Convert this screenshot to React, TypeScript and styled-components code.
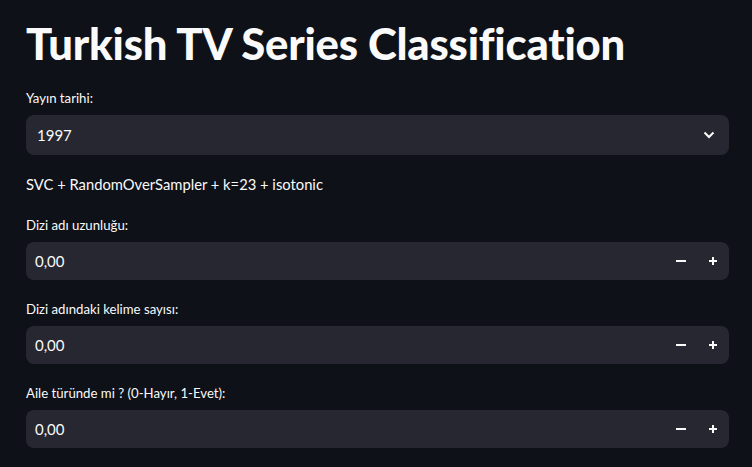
import React from "react";
import styled, { createGlobalStyle } from "styled-components";

const GlobalStyle = createGlobalStyle`
  html, body {
    margin: 0;
    padding: 0;
    background: #0e1117;
  }
  body {
    font-family: Lato, "Noto Sans", sans-serif;
    color: #fafafa;
  }
`;

const Page = styled.main`
  width: 752px;
  height: 467px;
  overflow: hidden;
  background: #0e1117;
  box-sizing: border-box;
  padding: 17px 23px 0 26px;
`;

const Stack = styled.div`
  display: flex;
  flex-direction: column;
  gap: 19px;
`;

const Title = styled.h1`
  margin: 0;
  font-size: 43.6px;
  font-weight: 900;
  line-height: 52px;
  letter-spacing: -0.2px;
  color: #fafafa;
`;

const Field = styled.div`
  display: flex;
  flex-direction: column;
`;

const Label = styled.label`
  font-size: 13.2px;
  line-height: 20px;
  margin-bottom: 7px;
  color: #fafafa;
`;

const Box = styled.div<{ $h: number; $pad: number }>`
  display: flex;
  align-items: center;
  height: ${(p) => p.$h}px;
  background: #262730;
  border-radius: 8px;
  padding-left: ${(p) => p.$pad}px;
  font-size: 15px;
`;

const Value = styled.span`
  flex: 1;
`;

const Chevron = styled.span`
  display: flex;
  width: 24px;
  margin-right: 8px;
  justify-content: center;
`;

const StepButton = styled.button`
  width: 32px;
  height: 100%;
  border: none;
  background: transparent;
  color: #fafafa;
  display: flex;
  align-items: center;
  justify-content: center;
  padding: 0;
  cursor: pointer;
`;

const Text = styled.p`
  margin: -2px 0 0;
  font-size: 14.75px;
  line-height: 24px;
`;

function NumberField({ label }: { label: string }) {
  return (
    <Field>
      <Label>{label}</Label>
      <Box $h={38} $pad={9}>
        <Value>0,00</Value>
        <StepButton aria-label="minus">
          <svg width="12" height="12" viewBox="0 0 12 12">
            <rect x="1" y="5" width="10" height="2" fill="#fafafa" />
          </svg>
        </StepButton>
        <StepButton aria-label="plus">
          <svg width="12" height="12" viewBox="0 0 12 12">
            <rect x="2" y="5" width="8" height="2" fill="#fafafa" />
            <rect x="5" y="2" width="2" height="8" fill="#fafafa" />
          </svg>
        </StepButton>
      </Box>
    </Field>
  );
}

export default function App() {
  return (
    <Page>
      <GlobalStyle />
      <Stack>
        <Title>Turkish TV Series Classification</Title>
        <Field>
          <Label>Yayın tarihi:</Label>
          <Box $h={40} $pad={11}>
            <Value>1997</Value>
            <Chevron>
              <svg width="12" height="8" viewBox="0 0 12 8">
                <path d="M1.5 1.5 L6 6 L10.5 1.5" stroke="#fafafa" strokeWidth="2" fill="none" />
              </svg>
            </Chevron>
          </Box>
        </Field>
        <Text>SVC + RandomOverSampler + k=23 + isotonic</Text>
        <NumberField label="Dizi adı uzunluğu:" />
        <NumberField label="Dizi adındaki kelime sayısı:" />
        <NumberField label="Aile türünde mi ? (0-Hayır, 1-Evet):" />
      </Stack>
    </Page>
  );
}
